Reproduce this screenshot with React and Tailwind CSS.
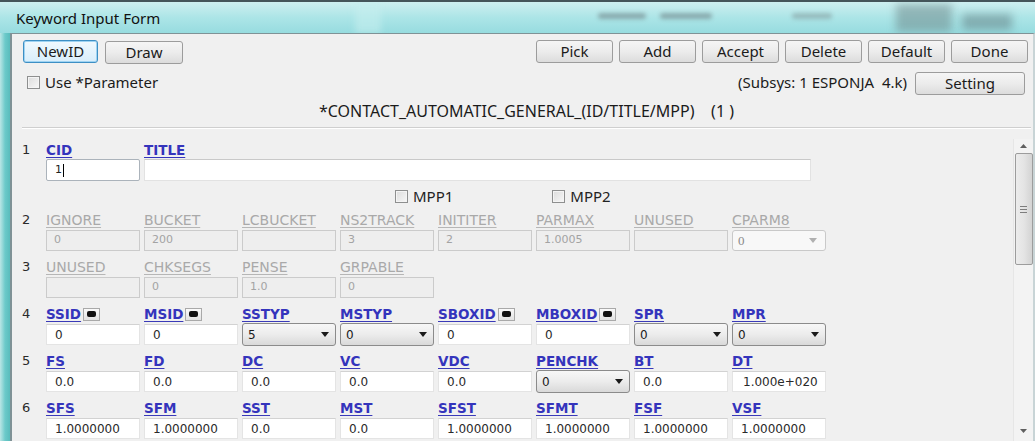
import React from "react";

const rows = [
  {
    n: 2,
    off: true,
    cells: [
      { label: "IGNORE", value: "0" },
      { label: "BUCKET", value: "200" },
      { label: "LCBUCKET", value: "" },
      { label: "NS2TRACK", value: "3" },
      { label: "INITITER", value: "2" },
      { label: "PARMAX", value: "1.0005" },
      { label: "UNUSED", value: "" },
      { label: "CPARM8", value: "0", kind: "offsel" },
    ],
  },
  {
    n: 3,
    off: true,
    cells: [
      { label: "UNUSED", value: "" },
      { label: "CHKSEGS", value: "0" },
      { label: "PENSE", value: "1.0" },
      { label: "GRPABLE", value: "0" },
    ],
  },
  {
    n: 4,
    cells: [
      { label: "SSID", value: "0", pick: true },
      { label: "MSID", value: "0", pick: true },
      { label: "SSTYP", value: "5", kind: "sel" },
      { label: "MSTYP", value: "0", kind: "sel" },
      { label: "SBOXID", value: "0", pick: true },
      { label: "MBOXID", value: "0", pick: true },
      { label: "SPR", value: "0", kind: "sel" },
      { label: "MPR", value: "0", kind: "sel" },
    ],
  },
  {
    n: 5,
    cells: [
      { label: "FS", value: "0.0" },
      { label: "FD", value: "0.0" },
      { label: "DC", value: "0.0" },
      { label: "VC", value: "0.0" },
      { label: "VDC", value: "0.0" },
      { label: "PENCHK", value: "0", kind: "sel" },
      { label: "BT", value: "0.0" },
      { label: "DT", value: "1.000e+020", pad: "pl-[10px]" },
    ],
  },
  {
    n: 6,
    cells: [
      { label: "SFS", value: "1.0000000" },
      { label: "SFM", value: "1.0000000" },
      { label: "SST", value: "0.0" },
      { label: "MST", value: "0.0" },
      { label: "SFST", value: "1.0000000" },
      { label: "SFMT", value: "1.0000000" },
      { label: "FSF", value: "1.0000000" },
      { label: "VSF", value: "1.0000000" },
    ],
  },
];

function Btn({ children, w = "w-[77px]", focus = false }) {
  return (
    <button
      className={`${w} h-[23px] rounded-[3px] border text-[15px] leading-none text-[#1b1b1b] ${
        focus
          ? "border-[#3d8fc4] bg-gradient-to-b from-[#f1f9fe] to-[#d8eefb] shadow-[inset_0_0_0_1px_#9fd3f2]"
          : "border-[#9c9c9c] bg-gradient-to-b from-[#f5f5f5] via-[#ececec] to-[#dcdcdc]"
      }`}
    >
      {children}
    </button>
  );
}

function Check() {
  return (
    <span className="block h-[13px] w-[13px] border border-[#8e8f8f] bg-gradient-to-br from-[#dcdcdc] to-[#f7f7f7] shadow-[inset_0_0_0_1px_#f4f4f4]" />
  );
}

function Caret({ color = "#1a1a1a" }) {
  return (
    <svg width="8" height="5" viewBox="0 0 8 5">
      <polygon points="0,0 8,0 4,5" fill={color} />
    </svg>
  );
}

function PickBox() {
  return (
    <span className="ml-[2px] flex h-[13px] w-[17px] items-center justify-center border border-[#a9a9a9] bg-gradient-to-b from-[#fafafa] to-[#e2e2e2]">
      <span className="h-[6px] w-[9px] rounded-[2px] bg-[#111]" />
    </span>
  );
}

function Label({ cell, off }) {
  if (off) {
    return (
      <span className="h-[16px] whitespace-nowrap text-[14px] leading-[16px] text-[#a9a9a9] underline decoration-[#b6b6b6] underline-offset-2">
        {cell.label}
      </span>
    );
  }
  return (
    <span className="flex h-[16px] items-center whitespace-nowrap">
      <span className="text-[13.5px] font-bold leading-[16px] text-[#3434bc] underline decoration-[#3a3ab8] underline-offset-2">
        {cell.label}
      </span>
      {cell.pick && <PickBox />}
    </span>
  );
}

function Field({ cell, off }) {
  if (cell.kind === "sel") {
    return (
      <div className="-my-px flex h-[23px] items-center justify-between rounded-[3px] border border-[#8b8b8b] bg-gradient-to-b from-[#f7f7f7] via-[#ececec] to-[#d9d9d9] pl-[5px] pr-[6px] text-[12px] text-[#1a1a1a]">
        <span>{cell.value}</span>
        <Caret />
      </div>
    );
  }
  if (cell.kind === "offsel") {
    return (
      <div className="flex h-[21px] items-center justify-between rounded-[3px] border border-[#c9c9c9] bg-[#f8f8f8] pl-[5px] pr-[8px] font-['Liberation_Serif',serif] text-[13px] text-[#8a8a8a]">
        <span>{cell.value}</span>
        <Caret color="#b0b0b0" />
      </div>
    );
  }
  if (off) {
    return (
      <div className="flex h-[21px] items-center border border-[#cbcbcb] bg-[#eeeeee] pl-[7px] text-[11px] text-[#a3a3a3]">
        {cell.value}
      </div>
    );
  }
  return (
    <div
      className={`flex h-[21px] items-center border border-[#e4e4e4] border-t-[#d2d2d2] bg-white ${
        cell.pad || "pl-[8px]"
      } text-[12px] text-[#2a2a2a]`}
    >
      {cell.value}
    </div>
  );
}

function FormRow({ row }) {
  return (
    <div className="flex">
      <span className="h-[16px] w-[24px] text-[13px] leading-[16px] text-[#2a2a2a]">
        {row.n}
      </span>
      <div className="flex gap-[4px]">
        {row.cells.map((c, i) => (
          <div key={i} className="flex w-[94px] flex-col gap-[2px]">
            <Label cell={c} off={row.off} />
            <Field cell={c} off={row.off} />
          </div>
        ))}
      </div>
    </div>
  );
}

function ScrollBar() {
  return (
    <div className="mt-[10px] flex w-[20px] flex-col items-center border-l border-[#e6e6e6] bg-[#f3f3f3]">
      <div className="flex h-[14px] items-center justify-center">
        <svg width="7" height="4" viewBox="0 0 7 4">
          <polygon points="0,4 7,4 3.5,0" fill="#5f5f5f" />
        </svg>
      </div>
      <div className="flex h-[112px] w-[18px] items-center justify-center rounded-[2px] border border-[#9c9c9c] bg-gradient-to-r from-[#ececec] via-[#e4e4e4] to-[#d3d3d3]">
        <div className="flex flex-col gap-[2px]">
          <span className="h-px w-[7px] bg-[#7d7d7d]" />
          <span className="h-px w-[7px] bg-[#7d7d7d]" />
          <span className="h-px w-[7px] bg-[#7d7d7d]" />
        </div>
      </div>
      <div className="flex-1" />
      <div className="flex h-[12px] items-start justify-center pb-[4px]">
        <svg width="7" height="4" viewBox="0 0 7 4">
          <polygon points="0,0 7,0 3.5,4" fill="#5f5f5f" />
        </svg>
      </div>
    </div>
  );
}

export default function App() {
  return (
    <div className="flex h-[441px] w-[1035px] flex-col overflow-hidden bg-[#f0f0f0] font-['Noto_Sans',sans-serif]">
      {/* window caption */}
      <div className="relative h-[33px] shrink-0 overflow-hidden border-t-2 border-[#44555a] bg-gradient-to-b from-[#cdeff0] via-[#ace5e7] to-[#97dcdf]">
        <div className="absolute left-[355px] top-0 h-full w-[26px] bg-[#c5eeee]/60 blur-[3px]" />
        <div className="absolute left-[598px] top-[11px] h-[6px] w-[48px] rounded bg-[#6f8487]/60 blur-[2px]" />
        <div className="absolute left-[660px] top-[11px] h-[6px] w-[52px] rounded bg-[#6f8487]/60 blur-[2px]" />
        <div className="absolute left-[792px] top-[11px] h-[6px] w-[40px] rounded bg-[#7d9194]/50 blur-[2px]" />
        <div className="absolute left-[896px] top-[2px] h-[28px] w-[56px] bg-[#6a8386]/50 blur-[4px]" />
        <div className="absolute left-[962px] top-[12px] h-[16px] w-[50px] bg-[#5e7a7e]/50 blur-[4px]" />
        <span className="absolute left-[16px] top-[6px] text-[15px] leading-[20px] text-[#111]">
          Keyword Input Form
        </span>
      </div>

      <div className="flex min-h-0 flex-1">
        <div className="w-[10px] shrink-0 bg-gradient-to-r from-[#b9e6e6] via-[#6ccaca] to-[#59bcbc]" />

        <div className="flex min-w-0 flex-1 flex-col border-l-2 border-r-2 border-t border-[#7f9296] border-r-[#c8d4d6] bg-[#f0f0f0]">
          {/* command buttons */}
          <div className="mt-[6px] flex pl-[11px] pr-[5px]">
            <Btn w="w-[75px]" focus>
              NewID
            </Btn>
            <div className="ml-[7px]">
              <Btn w="w-[78px]">Draw</Btn>
            </div>
            <div className="ml-auto flex gap-[6px]">
              <Btn>Pick</Btn>
              <Btn>Add</Btn>
              <Btn>Accept</Btn>
              <Btn>Delete</Btn>
              <Btn>Default</Btn>
              <Btn>Done</Btn>
            </div>
          </div>

          <div className="mt-[6px] flex h-[25px] items-center pl-[15px] pr-[8px]">
            <Check />
            <span className="ml-[5px] text-[15px] text-[#1b1b1b]">Use *Parameter</span>
            <span className="ml-auto text-[15px] text-[#1b1b1b]">
              (Subsys: 1 ESPONJA&nbsp; 4.k)
            </span>
            <div className="ml-[8px]">
              <Btn w="w-[110px]">Setting</Btn>
            </div>
          </div>

          <div className="flex h-[32px] items-center justify-center pl-[8px] text-[16px] text-[#1b1b1b]">
            <span className="whitespace-pre">*CONTACT_AUTOMATIC_GENERAL_(ID/TITLE/MPP)    (1 )</span>
          </div>

          <div className="ml-[10px] mr-[2px] border-b border-t border-b-white border-t-[#cfcfcf]" />

          {/* keyword card */}
          <div className="flex min-h-0 flex-1">
            <div className="flex-1 pl-[10px] pt-[13px] font-['DejaVu_Sans',sans-serif]">
              <div className="flex">
                <span className="h-[16px] w-[24px] text-[13px] leading-[16px] text-[#2a2a2a]">1</span>
                <div className="flex flex-col">
                  <div className="flex h-[16px] items-center">
                    <span className="w-[98px] text-[13.5px] font-bold text-[#3434bc] underline underline-offset-2">
                      CID
                    </span>
                    <span className="text-[13.5px] font-bold text-[#3434bc] underline underline-offset-2">
                      TITLE
                    </span>
                  </div>
                  <div className="mt-px flex">
                    <div className="flex h-[22px] w-[94px] items-center rounded-[2px] border border-[#abb3bb] bg-white pl-[8px] text-[11px] text-[#222]">
                      1<span className="ml-[1px] h-[13px] w-[1px] bg-black" />
                    </div>
                    <div className="ml-[4px] h-[22px] w-[667px] border border-[#e2e2e2] border-t-[#c9c9c9] bg-white" />
                  </div>
                </div>
              </div>

              <div className="flex h-[31px] items-center pl-[373px] font-['Noto_Sans',sans-serif] text-[15px] text-[#222]">
                <Check />
                <span className="ml-[5px]">MPP1</span>
                <div className="ml-[99px]">
                  <Check />
                </div>
                <span className="ml-[5px]">MPP2</span>
              </div>

              <div className="flex flex-col gap-[8px]">
                {rows.map((r) => (
                  <FormRow key={r.n} row={r} />
                ))}
              </div>
            </div>
            <ScrollBar />
          </div>
        </div>
      </div>
    </div>
  );
}
